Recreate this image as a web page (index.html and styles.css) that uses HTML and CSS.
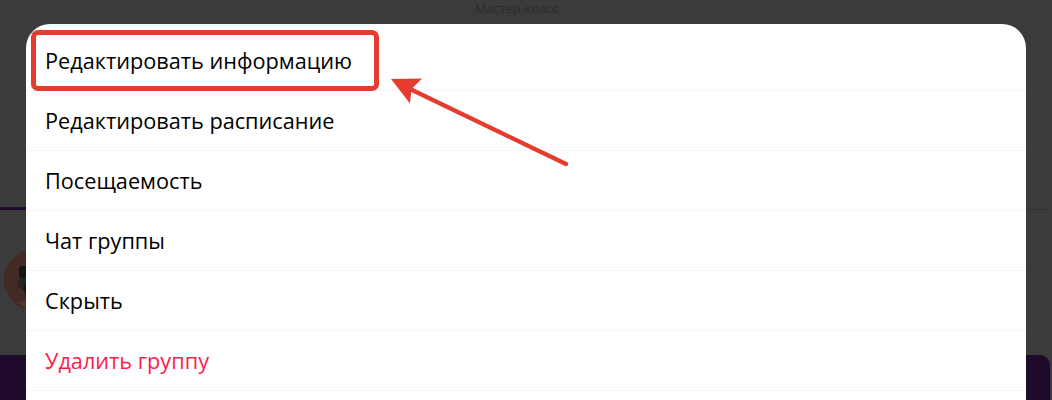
FILE: index.html
```
<!DOCTYPE html>
<html lang="ru">
<head>
    <meta charset="utf-8">
    <title>Группа</title>
    <link rel="stylesheet" href="styles.css">
</head>
<body>
    <div class="page">
        <div class="page-header">Мастер-класс</div>
        <div class="tabs"><div class="tab-active"></div></div>
        <div class="member">
            <svg class="avatar" width="62" height="62" viewBox="0 0 62 62">
                <circle cx="31" cy="31" r="31" fill="#432a23"/>
                <path d="M15 20q0-3 5-3h14v36h-8q-4-3-5-10q-6-8-6-23z" fill="#141413"/>
                <path d="M14 32l3-4 2 3 1 8q-5 1-6-3z" fill="#30211b"/>
                <path d="M17 29h10v7h-8z" fill="#12291f"/>
                <path d="M15 55q3-5 12-4v9q-7-1-12-5z" fill="#50382f"/>
            </svg>
        </div>
        <div class="bottom-bar"></div>
    </div>

    <div class="sheet">
        <ul class="menu">
            <li>Редактировать информацию</li>
            <li>Редактировать расписание</li>
            <li>Посещаемость</li>
            <li>Чат группы</li>
            <li>Скрыть</li>
            <li class="danger">Удалить группу</li>
        </ul>
    </div>

    <div class="highlight"></div>
    <svg class="arrow" width="190" height="100" viewBox="385 70 190 100">
        <path d="M410 89L566 164" stroke="#e63c30" stroke-width="4.2" stroke-linecap="round"/>
        <path d="M391 79L422 78.500L411.500 89L410 103.500z" fill="#e63c30"/>
    </svg>
</body>
</html>
```

FILE: styles.css
```
* {
    box-sizing: border-box;
}

body {
    margin: 0;
    height: 400px;
    overflow: hidden;
    background-color: #3c3c3c;
    font-family: "Open Sans", "Noto Sans", sans-serif;
}

/* dimmed page under the menu */
.page {
    display: flex;
    flex-direction: column;
    height: 400px;
    margin-right: 2px;
}

.page-header {
    height: 207px;
    padding-right: 17px;
    font-size: 12.8px;
    line-height: 16px;
    text-align: center;
    color: #2b2b2b;
    background: linear-gradient(#3b3b3c, #3b3b3c 24px, #3c3c3c 100px);
}

.tabs {
    height: 3px;
    margin-bottom: 21px;
    border-bottom: 1px solid #333;
}

.tab-active {
    width: 300px;
    height: 3px;
    background-color: #1f0a2b;
}

.member {
    height: 99px;
    margin-bottom: 25px;
    padding: 18px 4px;
    background-color: #3b3b3d;
}

.bottom-bar {
    flex: 1;
    border-top-right-radius: 10px;
    background-color: #1f0a2b;
}

/* menu */
.sheet {
    position: absolute;
    top: 24px;
    left: 26px;
    width: 1000px;
    height: 376px;
    padding-top: 7px;
    border-radius: 24px 24px 0 0;
    background-color: #fff;
}

.menu {
    margin: 0;
    padding: 0;
    list-style: none;
}

.menu li {
    height: 60px;
    padding-left: 19px;
    border-bottom: 1px solid #faf3fc;
    font-size: 21.7px;
    font-weight: 430;
    line-height: 60px;
    color: #000;
}

.menu .danger {
    color: #fc1c4c;
}

/* pointer to the first item */
.highlight {
    position: absolute;
    top: 30px;
    left: 31px;
    width: 348px;
    height: 61px;
    border: 5px solid #e63c30;
    border-radius: 7px;
}

.arrow {
    position: absolute;
    top: 70px;
    left: 385px;
}
```
